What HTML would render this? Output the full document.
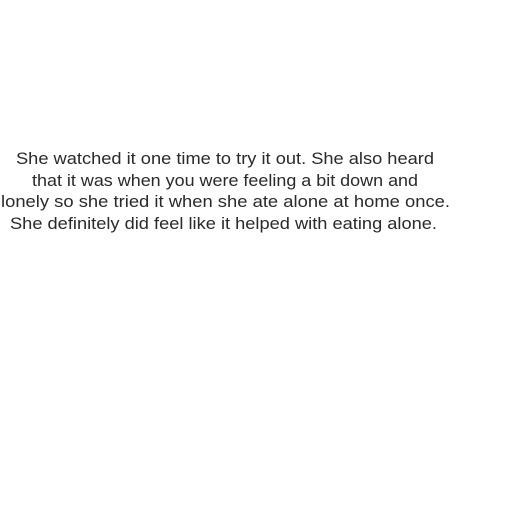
<!DOCTYPE html>
<html><head><style>html,body{margin:0;padding:0;background:#fff;width:513px;height:515px;overflow:hidden}</style></head>
<body>
<svg width="513" height="515" xmlns="http://www.w3.org/2000/svg" style="display:block">
<g font-family="Liberation Sans, sans-serif" font-size="16.5" fill="#2a2a2a">
<text x="16" y="164" textLength="418" lengthAdjust="spacingAndGlyphs">She watched it one time to try it out. She also heard</text>
<text x="32" y="186" textLength="386" lengthAdjust="spacingAndGlyphs">that it was when you were feeling a bit down and</text>
<text x="1" y="207" textLength="449" lengthAdjust="spacingAndGlyphs">lonely so she tried it when she ate alone at home once.</text>
<text x="10" y="229" textLength="427" lengthAdjust="spacingAndGlyphs">She definitely did feel like it helped with eating alone.</text>
</g>
</svg>
</body></html>
